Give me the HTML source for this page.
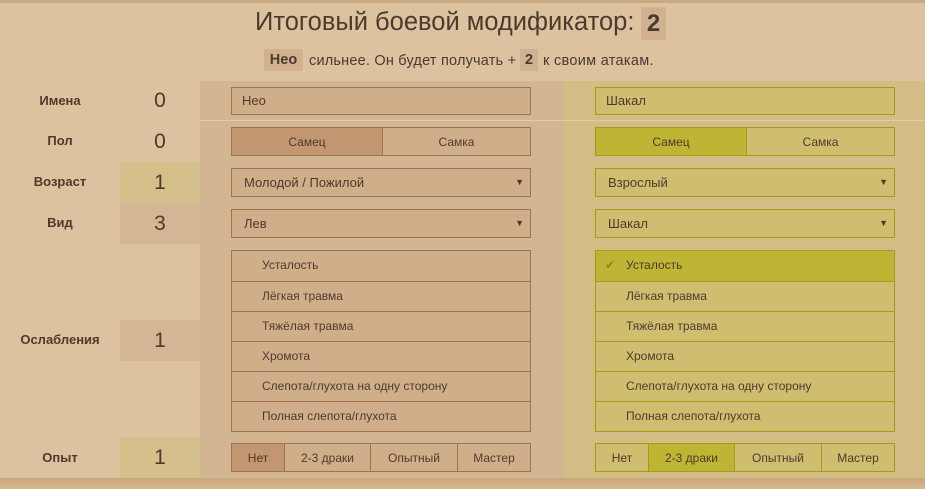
<!DOCTYPE html>
<html><head><meta charset="utf-8"><style>
*{box-sizing:border-box;margin:0;padding:0}
body{width:925px;height:489px;overflow:hidden;background:#dcc29e;font-family:"Liberation Sans","DejaVu Sans",sans-serif;color:#5a4535;position:relative}
.a{position:absolute;white-space:nowrap}
.top{left:0;top:0;width:925px;height:3px;background:#caa880}
.bot{left:0;top:478px;width:925px;height:11px;background:linear-gradient(#c9a57c,#d8b890)}
.lp{left:200px;top:81px;width:363px;height:397px;background:#d4b592}
.rp{left:563px;top:81px;width:362px;height:397px;background:#d3bd84}
.div{top:120px;height:1px;background:#e0ccab}
.lab{left:0;width:120px;text-align:center;font-weight:bold;font-size:13px;color:#4e3a2c}
.val{left:120px;width:80px;height:41px;line-height:41px;text-align:center;font-size:21px;color:#4e3a2c}
.in{height:28px;line-height:26px;font-size:13px;padding-left:12px;border:1px solid #9c7452;background:#d0ae8a;color:#4e3a2c}
.in.r{border-color:#a89a1c;background:#cfbd70}
.sel::after{content:"▼";position:absolute;right:6px;font-size:9px;color:#4e3a2c}
.seg{display:flex;height:30px;border:1px solid #9c7452;background:#d0ae8a;font-size:12px}
.seg div{display:flex;align-items:center;justify-content:center;border-left:1px solid #9c7452;color:#4e3a2c}
.seg div:first-child{border-left:none}
.seg .on{background:#c19671}
.seg.r{border-color:#a89a1c;background:#cfbd70}
.seg.r div{border-color:#a89a1c}
.seg.r .on{background:#bfb535}
.list{border:1px solid #9c7452;background:#d0ae8a}
.list div{height:30px;line-height:29px;border-top:1px solid #9c7452;padding-left:30px;font-size:12px;color:#4e3a2c}
.list div:first-child{border-top:none}
.list.r{border-color:#a89a1c;background:#cfbd70}
.list.r div{border-color:#a89a1c}
.list.r .on{background:#bfb535}
.st{top:52px;height:22px;line-height:18px;font-size:14.5px;color:#4a3a30}
</style></head><body>
<div class="a top"></div>
<div class="a lp"></div><div class="a rp"></div>
<div class="a div" style="left:200px;width:725px"></div>
<div class="a bot"></div>

<div class="a" style="left:255px;top:8px;font-size:25.5px;color:#4a3a30">Итоговый боевой модификатор:</div>
<div class="a" style="left:641px;top:7px;width:25px;height:33px;background:#d2b28e;font-size:24px;font-weight:bold;text-align:center;line-height:33px;color:#4a3a30">2</div>
<div class="a" style="left:264px;top:49px;width:39px;height:22px;background:#d2b28e;font-size:14.5px;font-weight:bold;text-align:center;line-height:22px;color:#4a3a30">Нео</div>
<div class="a" style="left:520px;top:49px;width:18px;height:22px;background:#d2b28e;font-size:14.5px;font-weight:bold;text-align:center;line-height:22px;color:#4a3a30">2</div>
<div class="a st" style="left:309px;letter-spacing:0.2px">сильнее. Он будет получать +</div>
<div class="a st" style="left:543px;letter-spacing:0.3px">к своим атакам.</div>

<div class="a lab" style="top:93px">Имена</div>
<div class="a lab" style="top:133px">Пол</div>
<div class="a lab" style="top:174px">Возраст</div>
<div class="a lab" style="top:215px">Вид</div>
<div class="a lab" style="top:332px">Ослабления</div>
<div class="a lab" style="top:450px">Опыт</div>

<div class="a val" style="top:80px">0</div>
<div class="a val" style="top:121px">0</div>
<div class="a val" style="top:162px;background:#d5bf8b">1</div>
<div class="a val" style="top:203px;background:#d4b594">3</div>
<div class="a val" style="top:320px;background:#d4b594">1</div>
<div class="a val" style="top:437px;background:#d5bf8b">1</div>

<div class="a in" style="left:231px;top:87px;width:300px;padding-left:10px">Нео</div>
<div class="a seg" style="left:231px;top:127px;width:300px;height:29px"><div class="on" style="width:150px">Самец</div><div style="flex:1">Самка</div></div>
<div class="a in sel" style="left:231px;top:168px;width:300px;height:29px;line-height:27px">Молодой / Пожилой</div>
<div class="a in sel" style="left:231px;top:209px;width:300px;height:29px;line-height:27px">Лев</div>
<div class="a list" style="left:231px;top:250px;width:300px"><div>Усталость</div><div>Лёгкая травма</div><div>Тяжёлая травма</div><div>Хромота</div><div>Слепота/глухота на одну сторону</div><div>Полная слепота/глухота</div></div>
<div class="a seg" style="left:231px;top:443px;width:300px;height:29px"><div class="on" style="width:52px">Нет</div><div style="width:86px">2-3 драки</div><div style="width:87px">Опытный</div><div style="flex:1">Мастер</div></div>

<div class="a in r" style="left:595px;top:87px;width:300px;padding-left:10px">Шакал</div>
<div class="a seg r" style="left:595px;top:127px;width:300px;height:29px"><div class="on" style="width:150px">Самец</div><div style="flex:1">Самка</div></div>
<div class="a in r sel" style="left:595px;top:168px;width:300px;height:29px;line-height:27px">Взрослый</div>
<div class="a in r sel" style="left:595px;top:209px;width:300px;height:29px;line-height:27px">Шакал</div>
<div class="a list r" style="left:595px;top:250px;width:300px"><div class="on" style="position:relative"><span style="position:absolute;left:9px;color:#8d8420;font-size:12px">✔</span>Усталость</div><div>Лёгкая травма</div><div>Тяжёлая травма</div><div>Хромота</div><div>Слепота/глухота на одну сторону</div><div>Полная слепота/глухота</div></div>
<div class="a seg r" style="left:595px;top:443px;width:300px;height:29px"><div style="width:52px">Нет</div><div class="on" style="width:86px">2-3 драки</div><div style="width:87px">Опытный</div><div style="flex:1">Мастер</div></div>
</body></html>
